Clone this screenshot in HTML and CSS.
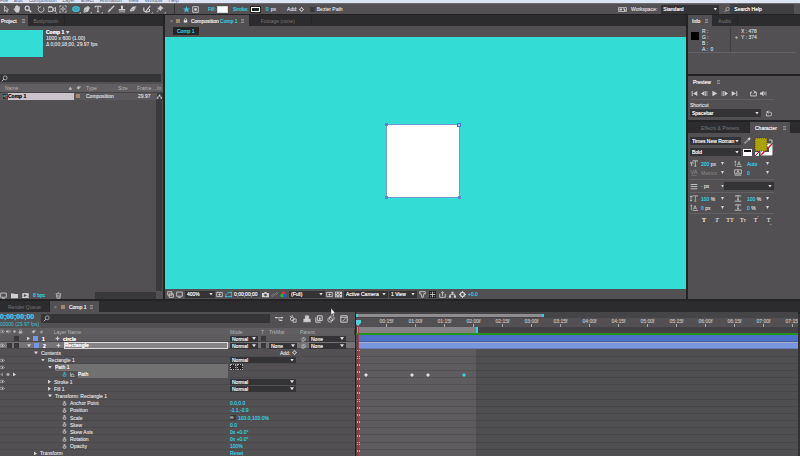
FILE: index.html
```
<!DOCTYPE html>
<html lang="en">
<head>
<meta charset="utf-8">
<title>Comp 1</title>
<link rel="stylesheet" href="styles.css">
</head>
<body>
<svg class="sprite" aria-hidden="true">
  <symbol id="arrow" viewBox="0 0 10 10"><path d="M3 1v7l2-2 1 3 1-.5L6 6h2z" fill="none" stroke="currentColor"/></symbol>
  <symbol id="hand" viewBox="0 0 10 10"><path d="M3 5V2h1v2V1h1v3-3h1v3l1-2h1v4L7 9H4L1 5l1-.5z" fill="currentColor" stroke="currentColor" stroke-width=".8"/></symbol>
  <symbol id="lens" viewBox="0 0 10 10"><circle cx="4" cy="4" r="2.6" fill="none" stroke="currentColor" stroke-width="1.5"/><path d="M6 6l3 3" stroke="currentColor" stroke-width="2"/></symbol>
  <symbol id="find" viewBox="0 0 10 10"><circle cx="6" cy="4" r="2.8" fill="none" stroke="currentColor"/><path d="M4 6L1 9" stroke="currentColor" stroke-width="1.3"/></symbol>
  <symbol id="rotate" viewBox="0 0 10 10"><path d="M2.5 3A3.6 3.6 0 1 0 8 3.2M1 1l1.600 2.400L5 2" fill="none" stroke="currentColor"/></symbol>
  <symbol id="camera" viewBox="0 0 10 10"><path d="M0 3h6v5H0zM6.500 5L9.500 3v5L6.500 6.500z" fill="none" stroke="currentColor" stroke-width="1.200"/><path d="M1 2h4" stroke="currentColor"/></symbol>
  <symbol id="panb" viewBox="0 0 10 10"><path d="M1 3V1h2M7 1h2v2M9 7v2H7M3 9H1V7" fill="none" stroke="currentColor"/><circle cx="5" cy="5" r="1.600" fill="none" stroke="currentColor"/><path d="M5 1v2M5 7v2M1 5h2M7 5h2" stroke="currentColor"/></symbol>
  <symbol id="ellipse" viewBox="0 0 10 10"><ellipse cx="5" cy="5" rx="4.800" ry="3.600" fill="currentColor"/><ellipse cx="5" cy="5" rx="2.500" ry="1.500" fill="none" stroke="#555" stroke-width=".6"/></symbol>
  <symbol id="pen" viewBox="0 0 10 10"><path d="M1 9l1-5 4-2 2 2-2 4zM6 1l3 3" fill="currentColor" stroke="currentColor" stroke-width=".8"/><path d="M1.500 8.500l3-3" stroke="#555" stroke-width=".6"/></symbol>
  <symbol id="type" viewBox="0 0 10 10"><path d="M1.500 3V1.500h7V3M5 1.500v7M3.500 8.500h3" fill="none" stroke="currentColor" stroke-width="1.300"/></symbol>
  <symbol id="brush" viewBox="0 0 10 10"><path d="M9 1L4 6" stroke="currentColor" stroke-width="1.600"/><path d="M4.500 6c0 2-1.500 3-4 3 1.500-1 1-3.500 3-4z" fill="currentColor"/></symbol>
  <symbol id="stamp" viewBox="0 0 10 10"><path d="M3.500 2a1.500 1.500 0 0 1 3 0L6 5h3v2H1V5h3zM1 8h8v1.200H1z" fill="currentColor"/></symbol>
  <symbol id="eraser" viewBox="0 0 10 10"><path d="M1 6l4-4h4.500L6 7.500 1.500 8z" fill="currentColor"/><path d="M1 6h4l4-4" stroke="#555" stroke-width=".5" fill="none"/></symbol>
  <symbol id="roto" viewBox="0 0 10 10"><path d="M9 1L5 6 3 9M1 3v4l3 2 4-1V5" fill="none" stroke="currentColor" stroke-width="1.400"/></symbol>
  <symbol id="pin" viewBox="0 0 10 10"><path d="M5 1l4 3-2 .5L6 7 2 4l2.500-1zM4 5.500L1 9" fill="currentColor" stroke="currentColor" stroke-width=".8"/></symbol>
  <symbol id="star" viewBox="0 0 10 10"><path d="M5 0l1.300 3.500H10L7.200 5.800 8.200 9.500 5 7.300 1.800 9.500l1-3.700L0 3.500h3.700z" fill="currentColor"/></symbol>
  <symbol id="mask" viewBox="0 0 10 10"><path d="M1 1h8v8H1z" fill="none" stroke="currentColor" stroke-width="1.300"/><circle cx="5" cy="5" r="2" fill="currentColor"/></symbol>
  <symbol id="gear" viewBox="0 0 10 10"><circle cx="5" cy="5" r="3" fill="none" stroke="currentColor" stroke-width="2"/><path d="M5 0v2M5 8v2M0 5h2M8 5h2" stroke="currentColor" stroke-width="1.500"/></symbol>
  <symbol id="work" viewBox="0 0 18 10"><path d="M1 1h16v8H1z" fill="none" stroke="currentColor" stroke-width="1.500"/><path d="M3 3h5v4H3zM10 3h4v2h-4zM12 5h3v3h-3z" fill="currentColor"/></symbol>
  <symbol id="tag" viewBox="0 0 10 10"><path d="M1 6l4-4h4v3L5 9z" fill="currentColor"/><circle cx="7.300" cy="3.500" r=".8" fill="#555"/></symbol>
  <symbol id="comp" viewBox="0 0 10 10"><path d="M0 0h10v10H0z" fill="#333"/><path d="M1 2h4v4H1z" fill="#3da08c"/><path d="M5 5h4v4H5z" fill="#b64b55"/><path d="M6 1h3v3H6z" fill="#627fba"/></symbol>
  <symbol id="tree" viewBox="0 0 10 10"><path d="M3.500 1h3v3h-3zM0 6.500h3v3H0zM7 6.500h3v3H7z" fill="currentColor"/><path d="M5 3v2M1.500 7V5h7v2" fill="none" stroke="currentColor"/></symbol>
  <symbol id="folder" viewBox="0 0 10 10"><path d="M0 2h4l1 1h5v6H0z" fill="currentColor"/></symbol>
  <symbol id="film" viewBox="0 0 10 10"><path d="M0 1.500h10v7H0z" fill="currentColor"/><path d="M3 3l4 2-4 2z" fill="#444"/><path d="M1 2v6M9 2v6" stroke="#444" stroke-dasharray="1"/></symbol>
  <symbol id="trash" viewBox="0 0 10 10"><path d="M1 2.500h8M4 1h2M2 3l.7 6h4.600L8 3M4 4v4M6 4v4" fill="none" stroke="currentColor"/></symbol>
  <symbol id="frame" viewBox="0 0 10 10"><path d="M1 1.500h8v6H1z" fill="none" stroke="currentColor" stroke-width="1.200"/><path d="M3 9.300h4" stroke="currentColor"/></symbol>
  <symbol id="stack" viewBox="0 0 10 10"><path d="M1 1h6v5H1zM3 4h6v5H3z" fill="none" stroke="currentColor" stroke-width="1.200"/></symbol>
  <symbol id="region" viewBox="0 0 10 10"><path d="M1 2h8v6H1z" fill="none" stroke="currentColor" stroke-width="1.200"/><path d="M3 5h4M5 3v4" stroke="currentColor"/></symbol>
  <symbol id="path" viewBox="0 0 10 10"><path d="M1 8c0-5 3-6 8-6v6z" fill="none" stroke="currentColor" stroke-width="1.200"/><path d="M0 7h2v2H0zM8 1h2v2H8zM8 7h2v2H8z" fill="currentColor"/></symbol>
  <symbol id="snap" viewBox="0 0 10 10"><path d="M0 3h3l1-1.500h2L7 3h3v6H0z" fill="currentColor"/><circle cx="5" cy="5.700" r="1.800" fill="#444"/></symbol>
  <symbol id="link" viewBox="0 0 10 10"><path d="M4 6L2 8a1.500 1.500 0 0 1-1-2l3-2M6 4l2-2a1.500 1.500 0 0 1 1 2L6 6M3.500 6.500l3-3" fill="none" stroke="currentColor"/></symbol>
  <symbol id="rgb" viewBox="0 0 10 10"><circle cx="5" cy="3" r="2.500" fill="#d33"/><circle cx="3" cy="6.500" r="2.500" fill="#2b3"/><circle cx="7" cy="6.500" r="2.500" fill="#35d"/></symbol>
  <symbol id="grid" viewBox="0 0 10 10"><path d="M0 1h10v8H0z" fill="currentColor"/><path d="M1 3h2M5 3h2M3 5h2M7 5h2M1 7h2M5 7h2" stroke="#555" stroke-width="1.500"/></symbol>
  <symbol id="pixel" viewBox="0 0 10 10"><path d="M1 1h8v3H7L6 9H4L3 4H1z" fill="none" stroke="currentColor" stroke-width="1.200"/></symbol>
  <symbol id="fast" viewBox="0 0 10 10"><path d="M0 0h10v10H0z" fill="#222"/><path d="M5 1v8M1 5h8M2 2h1M7 2h1M2 8h1M7 8h1" stroke="currentColor" stroke-width="1.200"/></symbol>
  <symbol id="export" viewBox="0 0 10 10"><path d="M1 4v5h8V4M5 7V1M3 3l2-2 2 2" fill="none" stroke="currentColor" stroke-width="1.200"/></symbol>
  <symbol id="shape" viewBox="0 0 10 10"><path d="M5 0l1.500 3.500L10 5 6.500 6.500 5 10 3.500 6.500 0 5l3.500-1.500z" fill="currentColor"/></symbol>
  <symbol id="watch" viewBox="0 0 10 10"><circle cx="5" cy="6" r="3" fill="none" stroke="currentColor" stroke-width="1.600"/><path d="M3 1h4M5 1v2M5 4.500V6l1.500 1" fill="none" stroke="currentColor" stroke-width="1.300"/></symbol>
  <symbol id="graph" viewBox="0 0 10 10"><path d="M1 1v8h8M3 8V4h3v2h3" fill="none" stroke="currentColor" stroke-width="1.200"/></symbol>
  <symbol id="eye" viewBox="0 0 10 10"><path d="M0 4c3-3 7-2 9 1-2 3-6 3-9 1" fill="none" stroke="currentColor" stroke-width="1.200"/><circle cx="5" cy="5" r="1.300" fill="currentColor"/></symbol>
  <symbol id="sound" viewBox="0 0 10 10"><path d="M0 3.500h2L5 1v8L2 6.500H0z" fill="currentColor"/><path d="M6.500 3v4M8.500 2v6" stroke="currentColor"/></symbol>
  <symbol id="lock" viewBox="0 0 10 10"><path d="M1.500 4.500h7V9h-7z" fill="currentColor"/><path d="M3 5V3a2 2 0 0 1 4 0v2" fill="none" stroke="currentColor" stroke-width="1.300"/></symbol>
  <symbol id="dot" viewBox="0 0 10 10"><circle cx="5" cy="5" r="2.500" fill="currentColor"/></symbol>
  <symbol id="whip" viewBox="0 0 10 10"><path d="M5 5c0-1.500 2-1 2 .5C7 8 3 8 3 5c0-3 6-4 6 .5C9 9 4 10 2 8" fill="none" stroke="currentColor"/></symbol>
  <symbol id="flow" viewBox="0 0 12 10"><path d="M0 2h4v2H0zM8 2h4v2H8zM7 6h4v2H7z" fill="currentColor"/><path d="M4 3h4M6 3v4h2" fill="none" stroke="currentColor"/></symbol>
  <symbol id="draft" viewBox="0 0 10 10"><path d="M1 1l2 2M4 0v3" stroke="currentColor"/><circle cx="4" cy="5" r="2.300" fill="none" stroke="currentColor"/><path d="M5 5h4v4H5z" fill="none" stroke="currentColor"/></symbol>
  <symbol id="shy" viewBox="0 0 10 10"><path d="M3 1h4v4h2v3H1V5h2zM0 8.500h10" fill="currentColor" stroke="currentColor" stroke-width=".8"/></symbol>
  <symbol id="blend" viewBox="0 0 10 10"><path d="M3 1h6v6H3zM1 3v6h6" fill="none" stroke="currentColor" stroke-width="1.200"/><path d="M5 3h2v3H5z" fill="currentColor"/></symbol>
  <symbol id="blur" viewBox="0 0 10 10"><circle cx="6" cy="4" r="3" fill="none" stroke="currentColor"/><circle cx="4" cy="6" r="3" fill="none" stroke="currentColor"/></symbol>
  <symbol id="curve" viewBox="0 0 10 10"><path d="M1 1h8v8H1z" fill="none" stroke="currentColor" stroke-width="1.200"/><path d="M1 3h8M3 8l4-4" stroke="currentColor"/></symbol>
  <symbol id="first" viewBox="0 0 10 10"><path d="M1 1.500h1.400v7H1zM9 1.500v7L3 5z" fill="currentColor"/></symbol>
  <symbol id="prev" viewBox="0 0 10 10"><path d="M5 1.500v7L0 5zM6 1.500h1v7H6zM8 1.500h1v7H8z" fill="currentColor"/></symbol>
  <symbol id="play" viewBox="0 0 10 10"><path d="M2 1v8l7-4z" fill="currentColor"/></symbol>
  <symbol id="next" viewBox="0 0 10 10"><path d="M5 1.500v7L10 5zM3 1.500h1v7H3zM1 1.500h1v7H1z" fill="currentColor"/></symbol>
  <symbol id="last" viewBox="0 0 10 10"><path d="M7.600 1.500H9v7H7.600zM1 1.500v7L7 5z" fill="currentColor"/></symbol>
  <symbol id="loop" viewBox="0 0 10 10"><path d="M3 3H1v5.500h8V3H6M5 1l3 2-3 2" fill="none" stroke="currentColor" stroke-width="1.300"/></symbol>
  <symbol id="reset" viewBox="0 0 10 10"><path d="M2 3h5a2.500 2.500 0 0 1 0 5.500H2V5M5 1L2.500 3 5 5" fill="none" stroke="currentColor" stroke-width="1.200"/></symbol>
  <symbol id="dropper" viewBox="0 0 10 10"><path d="M1 9l1-2 4-4 1 1-4 4z" fill="none" stroke="currentColor"/><path d="M5 2l3 3 1.500-3L8 .5z" fill="currentColor"/></symbol>
  <symbol id="size" viewBox="0 0 12 10"><path d="M4 2V1h8v1M8 1v8M6.500 9h3M0 5V4h5v1M2.500 4v5" fill="none" stroke="currentColor" stroke-width="1.200"/></symbol>
  <symbol id="lead" viewBox="0 0 12 10"><path d="M5 8l2.500-6L10 8M6 6h3M4 9.500h8M2 2v7M1 3l1-2 1 2" fill="none" stroke="currentColor"/></symbol>
  <symbol id="kern" viewBox="0 0 12 10"><path d="M1 1l2.500 6L6 1M6 7l2.500-6L11 7M7 5h3M2 9h8" fill="none" stroke="currentColor"/></symbol>
  <symbol id="track" viewBox="0 0 12 10"><path d="M1 1h10v6H1zM4 6l2-4 2 4M1 9h10" fill="none" stroke="currentColor" stroke-width="1.200"/></symbol>
  <symbol id="lines" viewBox="0 0 12 10"><path d="M1 2h10M1 5h10M1 8.500h10" stroke="currentColor" stroke-width="1.300"/></symbol>
  <symbol id="vscale" viewBox="0 0 12 10"><path d="M4 2V1h8v1M8 1v8M6.500 9h3M1.500 1v8M0 3l1.500-2L3 3M0 7l1.500 2L3 7" fill="none" stroke="currentColor"/></symbol>
  <symbol id="hscale" viewBox="0 0 12 10"><path d="M2 2V1h8v1M6 1v6M4.500 7h3M1 9h10" fill="none" stroke="currentColor" stroke-width="1.300"/></symbol>
</svg>

<nav class="menubar"><span>File</span><span>Edit</span><span>Composition</span><span>Layer</span><span>Effect</span><span>Animation</span><span>View</span><span>Window</span><span>Help</span></nav>

<header class="toolbar">
  <div class="tools">
    <button aria-label="Selection"><svg><use href="#arrow"/></svg></button><button aria-label="Hand"><svg><use href="#hand"/></svg></button><button aria-label="Zoom"><svg><use href="#lens"/></svg></button>
  </div>
  <div class="tools">
    <button aria-label="Rotation"><svg><use href="#rotate"/></svg></button><button class="more" aria-label="Camera"><svg><use href="#camera"/></svg></button><button aria-label="Pan behind"><svg><use href="#panb"/></svg></button>
  </div>
  <div class="tools">
    <button class="more cy" aria-label="Ellipse"><svg><use href="#ellipse"/></svg></button><button class="more" aria-label="Pen"><svg><use href="#pen"/></svg></button><button class="more" aria-label="Type"><svg><use href="#type"/></svg></button>
  </div>
  <div class="tools">
    <button aria-label="Brush"><svg><use href="#brush"/></svg></button><button aria-label="Clone stamp"><svg><use href="#stamp"/></svg></button><button aria-label="Eraser"><svg><use href="#eraser"/></svg></button>
  </div>
  <div class="tools wide">
    <button class="more" aria-label="Roto brush"><svg><use href="#roto"/></svg></button><button class="more" aria-label="Puppet pin"><svg><use href="#pin"/></svg></button>
  </div>
  <div class="options">
    <svg class="cy"><use href="#star"/></svg><svg><use href="#mask"/></svg>
    <span class="pair first"><a href="#fill">Fill:</a><i class="swatch"></i></span>
    <span class="pair"><a href="#stroke">Stroke:</a><i class="swatch dark"></i></span>
    <span class="pair px"><a href="#w">0</a> px</span>
    <span class="pair add">Add: <svg class="g"><use href="#gear"/></svg></span>
    <label class="pair"><input type="checkbox">Bezier Path</label>
  </div>
  <div class="workspace-pick">
    <svg class="work"><use href="#work"/></svg>
    <label for="ws">Workspace:</label>
    <span class="select ws"><select id="ws"><option>Standard</option></select></span>
    <svg><use href="#find"/></svg>
    <input type="text" value="Search Help" aria-label="Search Help">
  </div>
</header>

<main class="main">
  <section class="panel project">
    <div class="tabs"><button class="tab on"><b>Project</b><i class="burger"></i></button><button class="tab">Bodymovin</button></div>
    <div class="summary">
      <div class="thumb"></div>
      <div><b>Comp 1 <i class="tri"></i></b><br>1000 x 600 (1.00)<br>Δ 0;00;18;00, 29.97 fps</div>
    </div>
    <label class="search"><svg><use href="#find"/></svg><input type="search" aria-label="Search project"></label>
    <table class="items">
      <colgroup><col class="c-name"><col class="c-tag"><col class="c-type"><col class="c-size"><col class="c-rate"><col></colgroup>
      <thead><tr><th><span class="nm">Name</span><i class="up"></i></th><th><svg><use href="#tag"/></svg></th><th>Type</th><th>Size</th><th>Frame ...</th><th>In</th></tr></thead>
      <tbody><tr><td><div class="item"><svg><use href="#comp"/></svg><b>Comp 1</b></div></td><td><i class="sand"></i></td><td>Composition</td><td></td><td>29.97</td><td class="end"><svg><use href="#tree"/></svg></td></tr></tbody>
    </table>
    <div class="gutter"><i></i></div>
    <footer class="foot"><svg><use href="#frame"/></svg><svg><use href="#folder"/></svg><svg><use href="#film"/></svg><a href="#bpc">8 bpc</a><svg><use href="#trash"/></svg><i class="hscroll"></i></footer>
  </section>

  <section class="panel viewer">
    <div class="tabs"><button class="tab on"><i class="x">×</i><i class="sand"></i><svg><use href="#lock"/></svg><b>Composition <span class="cy">Comp 1</span></b><i class="burger"></i></button><button class="tab">Footage (none)</button></div>
    <div class="crumb"><button>Comp 1</button></div>
    <div class="canvas"><div class="square"><i></i><i></i><i></i><i></i></div></div>
    <footer class="viewbar">
      <svg><use href="#stack"/></svg><svg><use href="#frame"/></svg>
      <span class="select zoom"><select aria-label="Magnification"><option>400%</option></select></span>
      <svg><use href="#region"/></svg><svg class="cy"><use href="#path"/></svg>
      <span class="now">0;00;00;00</span>
      <svg><use href="#snap"/></svg><svg class="dim"><use href="#link"/></svg><svg><use href="#rgb"/></svg>
      <span class="select res"><select aria-label="Resolution"><option>(Full)</option></select></span>
      <svg><use href="#region"/></svg><svg><use href="#grid"/></svg>
      <span class="select cam"><select aria-label="View"><option>Active Camera</option></select></span>
      <span class="select views"><select aria-label="Layout"><option>1 View</option></select></span>
      <svg><use href="#pixel"/></svg><svg><use href="#fast"/></svg><svg><use href="#export"/></svg><svg><use href="#tree"/></svg><svg><use href="#gear"/></svg>
      <a href="#exp">+0.0</a>
    </footer>
  </section>

  <aside class="side">
    <section class="panel info">
      <div class="tabs"><button class="tab on"><b>Info</b><i class="burger"></i></button><button class="tab">Audio</button></div>
      <div class="readout">
        <i class="black"></i>
        <div class="rgba">R :<br>G :<br>B :<br>A : &nbsp;0</div>
        <i class="plus">+</i>
        <div>X : 478<br>Y : 374</div>
      </div>
    </section>
    <section class="panel preview">
      <h2>Preview <i class="burger"></i></h2>
      <div class="transport"><button aria-label="First frame"><svg><use href="#first"/></svg></button><button aria-label="Previous frame"><svg><use href="#prev"/></svg></button><button aria-label="Play"><svg><use href="#play"/></svg></button><button aria-label="Next frame"><svg><use href="#next"/></svg></button><button aria-label="Last frame"><svg><use href="#last"/></svg></button><button class="gap" aria-label="Loop"><svg><use href="#loop"/></svg></button><button aria-label="Mute"><svg><use href="#sound"/></svg></button></div>
      <label for="sc">Shortcut</label>
      <div class="line"><span class="select sc"><select id="sc"><option>Spacebar</option></select></span><svg><use href="#reset"/></svg></div>
    </section>
    <section class="panel character">
      <div class="tabs"><button class="tab">Effects &amp; Presets</button><button class="tab on"><b>Character</b><i class="burger"></i></button></div>
      <div class="char">
        <div class="fonts">
          <div class="faces"><span class="select"><select aria-label="Font"><option>Times New Roman</option></select></span><span class="select"><select aria-label="Style"><option>Bold</option></select></span></div>
          <div class="pick"><svg><use href="#dropper"/></svg><i class="bw"></i></div>
          <svg class="paint" viewBox="0 0 20 20"><path d="M7 7h11v11H7z" fill="#fff" stroke="#eee"/><path d="M10 10h5v5h-5z" fill="#525052"/><path d="M7 18L18 7" stroke="#c42238" stroke-width="1.500"/><path d="M1 1h12v13H1z" fill="#a9a400" stroke="#6f2b20" stroke-width="1" stroke-dasharray="1 1"/><path d="M1 15h4v4H1z" fill="#ddd"/><path d="M1 19l4-4" stroke="#c42238"/><path d="M15 3h3v3" fill="none" stroke="#ccc"/></svg>
        </div>
        <div class="metrics">
          <span><svg><use href="#size"/></svg><a href="#s">200</a> px<i class="tri"></i></span><span><svg><use href="#lead"/></svg><a href="#l">Auto</a><i class="tri"></i></span>
          <span class="dim"><svg><use href="#kern"/></svg>Metrics<i class="tri"></i></span><span><svg><use href="#track"/></svg><a href="#t">0</a><i class="tri"></i></span>
        </div>
        <div class="metrics rule"><span><svg><use href="#lines"/></svg><a href="#sw">-</a> px<i class="tri"></i></span><span class="select"><select aria-label="Stroke order"><option></option></select></span></div>
        <div class="metrics rule">
          <span><svg><use href="#vscale"/></svg><a href="#v">100</a> %<i class="tri"></i></span><span><svg><use href="#hscale"/></svg><a href="#h">100</a> %<i class="tri"></i></span>
          <span><svg><use href="#lead"/></svg><a href="#b">0</a> px<i class="tri"></i></span><span><svg><use href="#hscale"/></svg><a href="#ts">0</a> %<i class="tri"></i></span>
        </div>
        <div class="styles"><button><b>T</b></button><button><em>T</em></button><button>TT</button><button>T<small>T</small></button><button>T<sup>'</sup></button><button>T<sub>,</sub></button></div>
      </div>
    </section>
  </aside>
</main>

<section class="timeline">
  <div class="tabs"><button class="tab queue">Render Queue</button><button class="tab on"><i class="x">×</i><i class="sand"></i><b>Comp 1</b><i class="burger"></i></button></div>
  <div class="split">
    <div class="layers">
      <div class="ctrl">
        <div class="clock"><b>0;00;00;00</b><span>00000 (29.97 fps)</span></div>
        <label class="search"><svg><use href="#find"/></svg><input type="search" aria-label="Search layers"></label>
        <div class="switches"><svg><use href="#flow"/></svg><svg><use href="#draft"/></svg><svg><use href="#shy"/></svg><svg><use href="#blend"/></svg><svg><use href="#blur"/></svg><svg><use href="#curve"/></svg></div>
      </div>
      <div class="heads"><div class="av"><svg><use href="#eye"/></svg><svg><use href="#sound"/></svg><svg><use href="#dot"/></svg><svg><use href="#lock"/></svg></div><div class="hname"><svg><use href="#tag"/></svg><span>#</span><span class="ln">Layer Name</span></div><div class="h-mode">Mode</div><div class="h-t">T</div><div class="h-trk">TrkMat</div><div class="h-par">Parent</div></div>
      <div class="rows">
        <div class="row layer"><div class="av"><i></i><i></i><i class="box"></i></div><div class="name"><i class="tri r"></i><i class="chip"></i><b class="n">1</b><svg><use href="#shape"/></svg><b>circle</b></div><div class="vals"><span class="select md"><select aria-label="Mode"><option>Normal</option></select></span><i class="bx"></i><span class="none"></span><svg class="wh"><use href="#whip"/></svg><span class="select pr"><select aria-label="Parent"><option>None</option></select></span></div></div>
        <div class="row layer sel"><div class="av"><svg><use href="#eye"/></svg><i class="box"></i><i class="box"></i></div><div class="name"><i class="tri"></i><i class="chip"></i><b class="n">2</b><svg><use href="#shape"/></svg><b class="edit">Rectangle</b></div><div class="vals"><span class="select md"><select aria-label="Mode"><option>Normal</option></select></span><i class="bx"></i><span class="select tk"><select aria-label="Track matte"><option>None</option></select></span><svg class="wh"><use href="#whip"/></svg><span class="select pr"><select aria-label="Parent"><option>None</option></select></span></div></div>
        <div class="row"><div class="av"></div><div class="name d1"><i class="tri"></i>Contents</div><div class="vals"><span class="addr">Add: <svg><use href="#gear"/></svg></span></div></div>
        <div class="row"><div class="av"><svg><use href="#eye"/></svg></div><div class="name d2"><i class="tri"></i>Rectangle 1</div><div class="vals"><span class="select wd"><select aria-label="Blend"><option>Normal</option></select></span></div></div>
        <div class="row"><div class="av"><svg><use href="#eye"/></svg></div><div class="name d3"><i class="tri"></i><span class="hl">Path 1</span></div><div class="vals"><i class="dir"></i><i class="dir"></i></div></div>
        <div class="row"><div class="av keys"><i class="tri l"></i><i class="dia"></i><i class="tri r"></i></div><div class="name d4"><svg class="cy"><use href="#watch"/></svg><svg><use href="#graph"/></svg><span class="hl">Path</span></div><div class="vals"></div></div>
        <div class="row"><div class="av"><svg><use href="#eye"/></svg></div><div class="name d3"><i class="tri r"></i>Stroke 1</div><div class="vals"><span class="select wd"><select aria-label="Blend"><option>Normal</option></select></span></div></div>
        <div class="row"><div class="av"><svg><use href="#eye"/></svg></div><div class="name d3"><i class="tri r"></i>Fill 1</div><div class="vals"><span class="select wd"><select aria-label="Blend"><option>Normal</option></select></span></div></div>
        <div class="row"><div class="av"></div><div class="name d3"><i class="tri"></i>Transform: Rectangle 1</div><div class="vals"></div></div>
        <div class="row"><div class="av"></div><div class="name d4"><svg><use href="#watch"/></svg>Anchor Point</div><div class="vals"><a href="#v1">0.0,0.0</a></div></div>
        <div class="row"><div class="av"></div><div class="name d4"><svg><use href="#watch"/></svg>Position</div><div class="vals"><a href="#v2">-1.1,-0.9</a></div></div>
        <div class="row"><div class="av"></div><div class="name d4"><svg><use href="#watch"/></svg>Scale</div><div class="vals"><i class="chain">∞</i><a href="#v3">100.0,100.0%</a></div></div>
        <div class="row"><div class="av"></div><div class="name d4"><svg><use href="#watch"/></svg>Skew</div><div class="vals"><a href="#v4">0.0</a></div></div>
        <div class="row"><div class="av"></div><div class="name d4"><svg><use href="#watch"/></svg>Skew Axis</div><div class="vals"><a href="#v5">0x +0.0°</a></div></div>
        <div class="row"><div class="av"></div><div class="name d4"><svg><use href="#watch"/></svg>Rotation</div><div class="vals"><a href="#v6">0x +0.0°</a></div></div>
        <div class="row"><div class="av"></div><div class="name d4"><svg><use href="#watch"/></svg>Opacity</div><div class="vals"><a href="#v7">100%</a></div></div>
        <div class="row"><div class="av"></div><div class="name d1"><i class="tri r"></i>Transform</div><div class="vals"><a href="#v8">Reset</a></div></div>
      </div>
    </div>
    <div class="graph">
      <div class="navi"><i></i></div>
      <div class="ruler"><span>00:15f</span><span>01:00f</span><span>01:15f</span><span>02:00f</span><span>02:15f</span><span>03:00f</span><span>03:15f</span><span>04:00f</span><span>04:15f</span><span>05:00f</span><span>05:15f</span><span>06:00f</span><span>06:15f</span><span>07:00f</span><span>07:15f</span></div>
      <div class="work-area"><i></i></div>
      <div class="tracks">
        <div class="trk bar"></div><div class="trk bar lit"></div><div class="trk"></div><div class="trk"></div><div class="trk"></div>
        <div class="trk"><i class="key k1"></i><i class="key k2"></i><i class="key k3"></i><i class="key k4"></i></div>
        <div class="trk"></div><div class="trk"></div><div class="trk"></div><div class="trk"></div><div class="trk"></div><div class="trk"></div><div class="trk"></div><div class="trk"></div><div class="trk"></div><div class="trk"></div><div class="trk"></div>
      </div>
      <div class="playhead"></div>
    </div>
    <div class="vscroll"></div>
  </div>
  <svg class="pointer" viewBox="0 0 6 9"><path d="M1 0v7l1.500-1.300L3.500 8.500l1-.4-1-2.500H5.500z" fill="#fff" stroke="#222" stroke-width=".4"/></svg>
</section>
</body>
</html>
```

FILE: styles.css
```
* { box-sizing: border-box; }
html, body { height: 100%; }
body {
  margin: 0; overflow: hidden;
  display: grid; grid-template: 3px 11px minmax(0, 1fr) 155px / minmax(0, 1fr);
  background: #232224; color: #d0ced0;
  font: 5px/6px "Liberation Sans", Arial, sans-serif;
  text-shadow: 0 0 0 currentColor;
}
button, input, select { font: inherit; color: inherit; background: none; border: 0; padding: 0; margin: 0; border-radius: 0; outline: 0; min-width: 0; text-shadow: 0 0 0 currentColor; }
select { appearance: none; width: 100%; padding-left: 2px; }
a, .cy { color: #37c3da; text-decoration: none; text-shadow: 0 0 0 currentColor; }
i { font-style: normal; }
svg { width: 7px; height: 7px; flex: none; display: block; }
.sprite { position: absolute; width: 0; height: 0; }
.dim { color: #8b898b; text-shadow: none; }
.tri { display: inline-block; width: 4px; height: 3px; flex: none; background: #d5d3d5; clip-path: polygon(0 0, 100% 0, 50% 100%); }
.tri.r { width: 3px; height: 4px; clip-path: polygon(0 0, 100% 50%, 0 100%); }
.tri.l { width: 3px; height: 4px; background: #8b898b; clip-path: polygon(100% 0, 100% 100%, 0 50%); }
.select { display: flex; align-items: center; background: #343335; color: #eceaec; height: 7px; padding-right: 2px; }
.select::after { content: ""; width: 4px; height: 3px; flex: none; background: #e2e0e2; clip-path: polygon(0 0, 100% 0, 50% 100%); }
.burger { display: inline-block; width: 3px; height: 4px; border-top: 1px solid #8d8b8d; border-bottom: 1px solid #8d8b8d; background: #6d6b6d; }
.sand { display: inline-block; width: 4px; height: 4px; background: #a08a6c; }
.x { color: #9a989a; }

.menubar { background: #dde5f4; color: #56617a; display: flex; align-items: flex-end; gap: 6px; padding-left: 0; overflow: hidden; line-height: 5px; text-shadow: none; }

.toolbar { display: flex; align-items: center; background: #535153; border-top: 1px solid #6e6c70; }
.tools { display: flex; margin-right: 2px; }
.tools button { width: 11px; height: 9px; display: grid; place-items: center; position: relative; }
.tools svg { width: 8px; height: 8px; }
.tools.wide button { width: 13px; }
.tools .more::after { content: ""; position: absolute; right: 0; bottom: 0; width: 2px; height: 2px; background: #aaa8aa; clip-path: polygon(100% 0, 100% 100%, 0 100%); }
.options { display: flex; align-items: center; gap: 2px; margin-left: 6px; padding-left: 8px; border-left: 1px solid #353436; height: 100%; }
.pair { display: flex; align-items: center; gap: 1px; margin-right: 3px; white-space: pre; }
.pair.first { margin-left: 7px; }
.pair.px { margin-right: 9px; }
.pair.add { margin-right: 4px; gap: 0; }
.pair .g { width: 5px; height: 5px; }
.pair input { appearance: none; width: 5px; height: 5px; background: #3b3a3c; margin-right: 1px; }
.swatch { width: 11px; height: 7px; background: #fff; border: 1px solid #d6d4d6; }
.swatch.dark { background: #222; border: 2px solid #fff; outline: 1px solid #222; outline-offset: -1px; }
.workspace-pick { display: flex; align-items: center; gap: 4px; margin-left: auto; width: 182px; height: 100%; }
.workspace-pick > svg:not(.work) { width: 6px; margin-left: 1px; }
.workspace-pick .work { width: 9px; height: 5px; }
.workspace-pick > input { width: 64px; flex: none; color: #f0eef0; background: #3f3e40; height: 10px; margin-left: -4px; padding-left: 4px; }
.select.ws { width: 58px; height: 9px; }

.main { display: grid; grid-template-columns: 163px minmax(0, 1fr) 112px; column-gap: 2px; padding: 1px 0 2px; min-height: 0; }
.panel { background: #525052; display: flex; flex-direction: column; min-height: 0; overflow: hidden; }
.tabs { background: #2c2b2d; display: flex; height: 11px; flex: none; }
.tab { color: #797779; display: flex; align-items: center; gap: 3px; padding: 0 6px; border-right: 1px solid #272628; white-space: pre; text-shadow: none; }
.tab.on { background: #525052; color: #e6e4e6; border: 0; }
.tab b { font-weight: normal; text-shadow: 0 0 0 currentColor; }
.project .tab.on { padding: 0 3px 0 1px; gap: 5px; }
.summary { display: flex; gap: 3px; height: 48px; padding-top: 3px; flex: none; }
.summary > div { line-height: 6px; white-space: nowrap; }
.summary b { color: #f0eef0; }
.summary .thumb { width: 43px; height: 27px; background: #33dcd4; margin-top: 1px; }
.search { display: flex; align-items: center; gap: 1px; background: #353436; height: 8px; padding-left: 1px; }
.search input { flex: 1; height: 7px; appearance: none; }
.project .search { margin-right: 2px; flex: none; }
.items { border-collapse: collapse; table-layout: fixed; width: 100%; margin-top: 2px; flex: none; }
.items th, .items td { padding: 0; height: 8px; text-align: left; font-weight: normal; white-space: nowrap; overflow: hidden; }
.items th { background: #605e60; color: #b5b3b5; text-shadow: none; border-bottom: 1px solid #454446; }
.items svg { width: 5px; height: 5px; }
.items td:nth-child(5) { padding-left: 1px; }
.c-name { width: 76px; } .c-tag { width: 10px; } .c-type { width: 32px; } .c-size { width: 19px; } .c-rate { width: 20px; }
.nm { padding-left: 5px; }
.up { display: inline-block; width: 4px; height: 3px; background: #bbb9bb; clip-path: polygon(50% 0, 100% 100%, 0 100%); margin-left: 50px; }
.item { display: flex; align-items: center; padding-left: 3px; }
.item b { background: #c9c2ca; color: #222; flex: 1; margin-right: 2px; height: 7px; line-height: 7px; }
.items tbody tr { background: #5a585a; }
.items .end { background: #39383a; }
.gutter { flex: 1; display: flex; justify-content: flex-end; padding-right: 1px; }
.gutter i { width: 6px; background: #3a393b; }
.foot { display: flex; align-items: center; height: 8px; gap: 4px; flex: none; }
.foot svg:last-of-type { margin-left: 6px; }
.hscroll { width: 61px; height: 7px; background: #39383a; margin-left: auto; margin-right: 7px; }

.viewer .tab.on { padding: 0 5px; }
.viewer .tab.on svg { width: 5px; height: 5px; }
.viewer .tab.on + .tab { padding: 0 16px 0 12px; }
.crumb { height: 11px; padding: 1px 8px; flex: none; }
.crumb button { background: #242325; color: #37c3da; height: 8px; padding: 0 4px; display: block; }
.canvas { flex: 1; background: #33dcd4; display: grid; place-items: center; padding: 0 5px 4px 0; }
.square { width: 74px; height: 74px; background: #fff; border: 1px solid #7597d4; position: relative; }
.square i { position: absolute; width: 3px; height: 3px; background: #5d84cf; top: -2px; left: -2px; }
.square i:nth-child(2) { left: auto; right: -2px; width: 4px; height: 4px; background: #8fc5e8; border: 1px solid #4d77c8; }
.square i:nth-child(3) { top: auto; bottom: -2px; }
.square i:nth-child(4) { top: auto; bottom: -2px; left: auto; right: -2px; }
.viewbar { display: flex; align-items: center; gap: 2px; height: 10px; padding-left: 2px; flex: none; white-space: nowrap; }
.viewbar svg { width: 7px; height: 7px; }
.zoom { width: 30px; } .res { width: 36px; } .cam { width: 44px; } .views { width: 28px; }
.viewbar .select { margin-right: -1px; }
.views ~ svg { margin-left: 1px; }
.now { width: 26px; background: #403f41; color: #eceaec; }

.side { display: grid; grid-template-rows: 59px 44px minmax(0, 1fr); row-gap: 2px; min-height: 0; }
.info .tab.on { gap: 5px; padding: 0 4px; }
.readout { display: flex; padding: 2px 4px 0 3px; color: #c6c4c6; margin-right: 4px; border-bottom: 1px solid #646264; height: 27px; line-height: 6px; }
.readout .black { width: 8px; height: 8px; background: #000; margin: 4px 3px 0 0; }
.rgba { width: 29px; border-right: 1px solid #3f3e40; }
.plus { width: 10px; padding: 6px 0 0 4px; }
.preview { padding-left: 2px; }
.preview h2 { font: inherit; margin: 3px 3px; color: #eceaec; display: flex; gap: 6px; align-items: center; }
.transport { display: flex; gap: 3px; height: 12px; align-items: center; border-bottom: 1px solid #615f61; width: 84px; margin-bottom: 2px; padding-left: 1px; }
.transport .gap { margin-left: 9px; }
.line { display: flex; gap: 4px; align-items: center; margin-top: 1px; }
.sc { width: 71px; height: 8px; flex: none; }
.character .tab:first-child { padding: 0 17px 0 13px; width: 62px; }
.character .tab.on { padding: 0 4px 0 5px; gap: 6px; }
.char { padding: 4px 0 0 2px; width: 86px; }
.fonts { display: flex; gap: 2px; }
.faces { display: grid; gap: 2px; width: 51px; }
.faces .select { height: 8px; }
.pick { display: grid; gap: 3px; width: 9px; justify-items: center; }
.bw { width: 9px; height: 7px; background: linear-gradient(#111 50%, #fff 50%); border: 1px solid #fff; }
.paint { width: 20px; height: 20px; }
.metrics { display: grid; grid-template-columns: 39px 45px; row-gap: 2px; padding: 3px 0; align-items: center; }
.metrics.rule { border-top: 1px solid #636163; padding: 2px 0; }
.metrics > span { display: flex; align-items: center; white-space: pre; }
.metrics > span:nth-child(even):not(.select) { padding-left: 5px; }
.metrics svg { width: 8px; height: 7px; margin-right: 3px; }
.metrics span:nth-child(even) svg { margin-right: 5px; }
.metrics .tri { margin-left: auto; margin-right: 5px; width: 3px; }
.metrics .select { height: 8px; margin-left: -5px; }
.styles { display: flex; gap: 5px; padding: 2px 0 0 10px; border-top: 1px solid #636163; font: 6px/8px "Liberation Serif", serif; }
.styles button { width: 8px; height: 8px; white-space: nowrap; text-align: center; }
.styles small, .styles sup, .styles sub { font-size: 4px; line-height: 0; }

.timeline { display: flex; flex-direction: column; min-height: 0; position: relative; }
.queue { padding: 0 12px 0 8px; width: 50px; }
.timeline .tab.on { width: 49px; padding: 0 4px; gap: 4px; }
.split { display: flex; flex: 1; min-height: 0; }
.layers { width: 355px; background: #525052; display: flex; flex-direction: column; flex: none; margin-right: 1px; margin-bottom: -1px; }
.ctrl { display: flex; height: 16px; padding-top: 1px; }
.clock { width: 41px; color: #37c3da; line-height: 6px; white-space: nowrap; text-shadow: none; }
.clock b { display: block; font-size: 7px; line-height: 8px; text-shadow: 0 0 0 currentColor; }
.ctrl .search { width: 229px; height: 9px; margin-top: 1px; padding-left: 2px; }
.switches { display: flex; gap: 4px; padding: 2px 0 0 5px; }
.switches svg { width: 8px; height: 8px; }
.switches svg:nth-child(2) { margin: 0 2px; }
.switches svg:last-child { margin-left: 1px; }
.heads { display: flex; align-items: center; height: 7px; background: #605e60; color: #b5b3b5; text-shadow: none; }
.heads svg { width: 5px; height: 5px; }
.heads .av { gap: 1px; }
.hname { width: 202px; display: flex; align-items: center; padding-left: 5px; gap: 4px; }
.ln { margin-left: 7px; }
.h-mode { width: 33px; padding-left: 2px; } .h-t { width: 8px; } .h-trk { width: 31px; } .h-par { flex: 1; border-right: 1px solid #444; }
.av { width: 26px; display: flex; align-items: center; height: 100%; flex: none; }
.av i.box { width: 5px; height: 5px; background: #39383a; margin-left: 2px; }
.av > i:not(.box):not(.tri):not(.dia) { width: 6px; }
.av svg { width: 5px; height: 5px; }
.keys { gap: 2px; }
.dia { width: 4px; height: 4px; background: #aaa8aa; clip-path: polygon(50% 0, 100% 50%, 50% 100%, 0 50%); margin: 0 1px; }
.rows, .tracks { flex: 1; display: grid; grid-template-rows: repeat(17, minmax(0, 1fr)); min-height: 0; }
.row { display: flex; align-items: center; box-shadow: inset 0 -1px #4a494b; min-height: 0; white-space: nowrap; }
.row.layer { background: #5d5b5d; }
.row.sel { background: #747274; }
.name { width: 202px; display: flex; align-items: center; height: 100%; gap: 3px; flex: none; padding-left: 1px; }
.name svg { width: 5px; height: 5px; }
.name.d1 { padding-left: 8px; } .name.d2 { padding-left: 15px; } .name.d3 { padding-left: 22px; } .name.d4 { padding-left: 36px; }
.chip { width: 5px; height: 5px; background: #7796ea; margin-right: 1px; }
.name .n { width: 10px; }
.name b { color: #f4f2f4; }
.name .edit { flex: 1; height: 7px; line-height: 5px; border: 1px solid #dddbdd; background: #858385; }
.hl { flex: 1; height: 100%; background: #727172; color: #eceaec; }
.vals { display: flex; align-items: center; padding-left: 2px; flex: 1; height: 100%; }
.vals .select { height: 6px; }
.md { width: 28px; } .tk { width: 28px; } .pr { width: 37px; } .wd { width: 66px; }
.bx { width: 5px; height: 5px; background: #3a393b; margin: 0 3px; }
.none { width: 28px; }
.wh { width: 6px; height: 6px; margin: 0 3px; }
.addr { display: flex; align-items: center; padding-left: 50px; white-space: pre; }
.addr svg { width: 5px; height: 5px; }
.dir { width: 6px; height: 6px; margin-right: 1px; background: #29282a; border: 1px dotted #aaa; }
.chain { background: #39383a; width: 6px; line-height: 5px; margin-right: 2px; }

.graph { flex: 1; min-width: 0; background: #4f4e50; display: flex; flex-direction: column; position: relative; margin-bottom: -1px; overflow: hidden; }
.navi { height: 6px; padding: 2px 0 1px; background: #454446; flex: none; }
.navi i { display: block; width: 188px; height: 3px; background: #8f8d8f; border: solid #37d0dc; border-width: 0 2px; }
.ruler { display: flex; height: 9px; padding-left: 16px; background: #525052; flex: none; overflow: hidden; }
.ruler span { width: 29px; flex: none; text-align: center; line-height: 6px; color: #b5b3b5; background: linear-gradient(#aaa8aa, #aaa8aa) 50% 100% / 1px 3px no-repeat; }
.work-area { height: 8px; background: #434143; border-bottom: 2px solid #23931e; flex: none; padding-left: 1px; }
.work-area i { display: block; width: 121px; height: 6px; background: #858385; border: solid #37d0dc; border-width: 0 2px; }
.tracks { background: linear-gradient(#5e5c5e, #5e5c5e) 2px 0 / 118px 100% no-repeat; }
.trk { box-shadow: inset 0 -1px rgba(50, 48, 50, .25); position: relative; }
.trk::before { content: ""; position: absolute; left: 1px; top: 1px; width: 3px; height: 5px; border: solid #d3a0a4; border-width: 1px 0; }
.trk.bar { background: #4c72c9; margin-left: 2px; }
.trk.lit { background: #7897de; border-top: 1px solid #a3adc9; }
.trk.bar::before { display: none; }
.key { position: absolute; top: 2px; width: 4px; height: 4px; background: #dedcde; clip-path: polygon(50% 0, 100% 50%, 50% 100%, 0 50%); }
.k1 { left: 8px; } .k2 { left: 54px; } .k3 { left: 70px; } .k4 { left: 106px; background: #3ad6e2; }
.playhead { position: absolute; left: 2px; top: 9px; bottom: 0; width: 1px; background: #a83a44; }
.playhead::before { content: ""; position: absolute; left: -3px; top: -1px; width: 6px; height: 6px; background: #50cfe0; clip-path: polygon(0 0, 100% 0, 100% 50%, 50% 100%, 0 50%); }
.vscroll { width: 2px; background: #333234; border-top: 2px solid #222; }
.pointer { position: absolute; left: 330px; top: 7px; width: 6px; height: 9px; }
```
